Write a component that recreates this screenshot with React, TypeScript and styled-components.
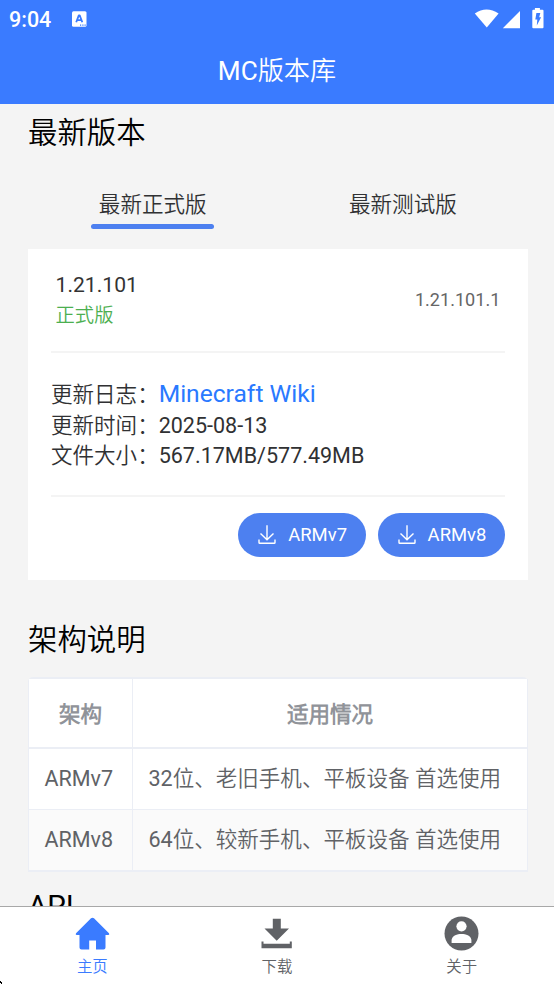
import React from "react";
import styled, { createGlobalStyle } from "styled-components";

const GlobalStyle = createGlobalStyle`
  * { box-sizing: border-box; }
  body {
    margin: 0;
    font-family: Roboto, "Noto Sans CJK SC DemiLight", "Noto Sans CJK SC", sans-serif;
    background: #f4f4f4;
  }
`;

const Screen = styled.div`
  display: flex;
  flex-direction: column;
  width: 554px;
  height: 984px;
  overflow: hidden;
  background: #f4f4f4;
`;

const Header = styled.header`
  flex: none;
  height: 104.4px;
  background: #3a7bff;
  color: #fff;
`;

const StatusBar = styled.div`
  display: flex;
  align-items: center;
  height: 37px;
  padding: 0 10px 0 9px;
`;

const Clock = styled.span`
  width: 63px;
  font-size: 21.5px;
  font-weight: 500;
  line-height: 38px;
  padding-top: 2px;
`;

const StatusIcons = styled.div`
  display: flex;
  margin-left: auto;
`;

const Title = styled.h1`
  margin: 0;
  height: 67px;
  font-size: 26.15px;
  font-weight: 400;
  line-height: 68px;
  text-align: center;
`;

const Content = styled.main`
  flex: 1;
  min-height: 0;
  overflow: hidden;
  padding: 0 26px 0 28px;
`;

const Heading = styled.h2<{ $gap?: number }>`
  margin: ${(p) => p.$gap ?? 0}px 0 0;
  font-size: 29.4px;
  font-weight: 400;
  line-height: 59px;
  height: 56px;
  color: #000;
`;

const Tabs = styled.div`
  display: grid;
  grid-template-columns: 1fr 1fr;
  height: 88.6px;
  margin-left: -0.4px;
`;

const Tab = styled.div<{ $active?: boolean }>`
  justify-self: center;
  width: 123px;
  height: 69px;
  padding-top: 25px;
  font-size: 21.54px;
  line-height: 39px;
  text-align: center;
  white-space: nowrap;
  color: #303133;
  &::after {
    content: "";
    display: ${(p) => (p.$active ? "block" : "none")};
    height: 5px;
    border-radius: 2.5px;
    background: #4d80f0;
  }
`;

const Card = styled.section`
  height: 330.9px;
  padding: 0 23px;
  background: #fff;
`;

const CardHead = styled.div`
  display: flex;
  justify-content: space-between;
  align-items: center;
  height: 104px;
  padding: 0 4.6px;
  border-bottom: 2px solid #f4f4f4;
`;

const Version = styled.div`
  padding-top: 2px;
  font-size: 21.1px;
  line-height: 30px;
  color: #333;
`;

const Channel = styled.div`
  font-size: 19.3px;
  line-height: 32px;
  color: #4caf50;
`;

const Build = styled.span`
  font-size: 18.1px;
  color: #666;
`;

const Details = styled.div`
  height: 144px;
  padding-top: 24px;
  border-bottom: 2px solid #f4f4f4;
  font-size: 21.54px;
  color: #303133;
`;

const DetailLine = styled.div<{ $height: number }>`
  height: ${(p) => p.$height}px;
  line-height: ${(p) => p.$height}px;
  white-space: nowrap;
`;

const WikiLink = styled.a`
  font-size: 24.6px;
  color: #2979ff;
`;

const Actions = styled.div`
  display: flex;
  justify-content: flex-end;
  gap: 12px;
  padding-top: 16.5px;
`;

const DownloadButton = styled.button`
  display: flex;
  align-items: center;
  width: 127.4px;
  height: 43.5px;
  padding: 0 0 0 20px;
  gap: 12px;
  border: 0;
  border-radius: 22px;
  background: #4d80f0;
  color: #fff;
  font-family: inherit;
  font-size: 18.46px;
`;

const Table = styled.div`
  display: grid;
  grid-template-columns: 104px 1fr;
  grid-template-rows: 70px 61px 62px;
  width: 500px;
  border: solid #ebeef5;
  border-width: 2px 0 0 1px;
  border-radius: 5px 5px 0 0;
  margin-top: 9.5px;
`;

const Cell = styled.div<{ $head?: boolean; $striped?: boolean; $mixed?: boolean }>`
  display: flex;
  align-items: center;
  justify-content: ${(p) => (p.$head ? "center" : "flex-start")};
  padding: 0 15.5px ${(p) => (p.$mixed ? 4 : 0)}px;
  border: solid #ebeef5;
  border-width: 0 1px ${(p) => (p.$head || p.$striped ? 2 : 1)}px 0;
  background: ${(p) => (p.$striped ? "#fafafa" : "#fff")};
  color: ${(p) => (p.$head ? "#909399" : "#606266")};
  font-size: 21.54px;
  font-weight: ${(p) => (p.$head ? 700 : 400)};
  white-space: nowrap;
`;

const NavBar = styled.nav`
  flex: none;
  display: grid;
  grid-template-columns: repeat(3, 1fr);
  height: 78px;
  border-top: 1px solid #a8a8a8;
  background: #fff;
`;

const NavItem = styled.a<{ $active?: boolean }>`
  display: flex;
  flex-direction: column;
  align-items: center;
  padding-top: 8px;
  font-size: 15.4px;
  line-height: 24px;
  color: ${(p) => (p.$active ? "#3a7bff" : "#606266")};
`;

const NavIcon = styled.svg`
  display: block;
  width: 37px;
  height: 37px;
  margin-bottom: 3px;
`;

const ScreenCorner = styled.svg`
  position: fixed;
  left: 0;
  bottom: 0;
`;

const TranslateIcon = () => (
  <svg width="15" height="16" viewBox="0 0 15 16">
    <rect y="0.3" width="14.5" height="15.4" rx="1.5" fill="#fff" />
    <path
      d="M4.200 11.300 6.800 4.400H7.700L10.300 11.300M5.200 9.200H9.200"
      fill="none"
      stroke="#3a7bff"
      strokeWidth="1.800"
      strokeLinejoin="round"
    />
    <path d="M8 14.200h1.200M10.300 14.200h1.200M12.500 14.200h1.200" stroke="#3a7bff" strokeWidth="1.200" />
  </svg>
);

const SignalIcons = () => (
  <svg width="70" height="22" viewBox="0 0 70 22">
    <path d="M0.8 5.400Q12.400-2.200 24.600 5.400L12.800 19.500Z" fill="#fff" />
    <path d="M28.800 20.200 46 3V20.200Z" fill="#fff" />
    <path d="M60.900 0h5v1.800H68.500a1 1 0 0 1 1 1V19.200a1 1 0 0 1-1 1H59.300a1 1 0 0 1-1-1V2.800a1 1 0 0 1 1-1h1.600Z" fill="#fff" />
    <path d="M62.400 5h3.900l-1.100 4.200h1.900l-4.300 8.300 .5-6h-2Z" fill="#3a7bff" />
  </svg>
);

const DownloadIcon = () => (
  <svg width="18" height="20" viewBox="0 0 18 20" fill="none" stroke="#fff" strokeWidth="1.400">
    <path d="M9 .3V14.500M2.500 8.500 9 14.800l6.500-6.300M1 14.500v3q0 .8.800.8H16.200q.8 0 .8-.8v-3" />
  </svg>
);

const HomeIcon = () => (
  <NavIcon viewBox="0 0 37 37" fill="currentColor">
    <path d="M17 3.300q1.500-1.200 3 0L35 18.200q.9 1.500-.7 1.800H31.500V32.500q0 2-2 2H22V25.500H15.200v9H7.500q-2 0-2-2V20H2.700q-1.600-.3-.7-1.800Z" />
  </NavIcon>
);

const SaveIcon = () => (
  <NavIcon viewBox="0 0 37 37" fill="currentColor">
    <path d="M14.800 3.800h8v9.800H31L18.700 25.700 6.500 13.600h8.300ZM3.500 26.500H5.500v2.300H31.800V26.500h2V33.300H3.500Z" />
  </NavIcon>
);

const UserIcon = () => (
  <NavIcon viewBox="0 0 37 37">
    <circle cx="18.500" cy="18.500" r="17" fill="currentColor" />
    <circle cx="18.500" cy="11.300" r="5.100" fill="#fff" />
    <path d="M8.600 27.900V24.700C9.500 20.500 14 18.900 18.500 18.900s9 1.600 9.900 5.800v3.200Z" fill="#fff" />
  </NavIcon>
);

const builds = ["ARMv7", "ARMv8"];

const rows = [
  ["ARMv7", "32位、老旧手机、平板设备 首选使用"],
  ["ARMv8", "64位、较新手机、平板设备 首选使用"],
];

const navItems = [
  { label: "主页", Icon: HomeIcon },
  { label: "下载", Icon: SaveIcon },
  { label: "关于", Icon: UserIcon },
];

export default function App() {
  return (
    <Screen lang="zh-CN">
      <GlobalStyle />
      <Header>
        <StatusBar>
          <Clock>9:04</Clock>
          <TranslateIcon />
          <StatusIcons>
            <SignalIcons />
          </StatusIcons>
        </StatusBar>
        <Title>MC版本库</Title>
      </Header>
      <Content>
        <Heading>最新版本</Heading>
        <Tabs>
          <Tab $active>最新正式版</Tab>
          <Tab>最新测试版</Tab>
        </Tabs>
        <Card>
          <CardHead>
            <div>
              <Version>1.21.101</Version>
              <Channel>正式版</Channel>
            </div>
            <Build>1.21.101.1</Build>
          </CardHead>
          <Details>
            <DetailLine $height={33}>
              更新日志：<WikiLink>Minecraft Wiki</WikiLink>
            </DetailLine>
            <DetailLine $height={31.5}>更新时间：2025-08-13</DetailLine>
            <DetailLine $height={30}>文件大小：567.17MB/577.49MB</DetailLine>
          </Details>
          <Actions>
            {builds.map((b) => (
              <DownloadButton key={b}>
                <DownloadIcon />
                {b}
              </DownloadButton>
            ))}
          </Actions>
        </Card>
        <Heading $gap={31.5}>架构说明</Heading>
        <Table>
          <Cell $head>架构</Cell>
          <Cell $head>适用情况</Cell>
          {rows.map(([arch, usage], i) => (
            <React.Fragment key={arch}>
              <Cell $striped={i % 2 === 1}>{arch}</Cell>
              <Cell $mixed $striped={i % 2 === 1}>{usage}</Cell>
            </React.Fragment>
          ))}
        </Table>
        <Heading $gap={5}>API</Heading>
      </Content>
      <NavBar>
        {navItems.map(({ label, Icon }, i) => (
          <NavItem key={label} $active={i === 0}>
            <Icon />
            {label}
          </NavItem>
        ))}
      </NavBar>
      <ScreenCorner width="3" height="4" viewBox="0 0 3 4">
        <path d="M0 1H1V2H2V4H1V3H0Z" fill="#000" />
      </ScreenCorner>
    </Screen>
  );
}
